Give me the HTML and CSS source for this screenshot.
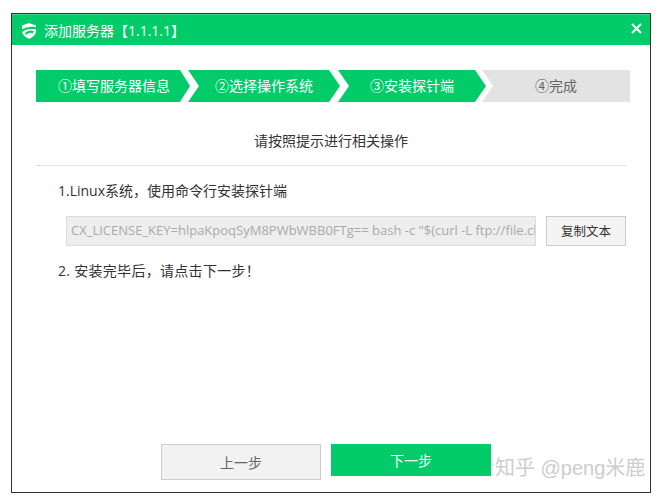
FILE: index.html
```html
<!DOCTYPE html>
<html lang="zh-CN">
<head>
<meta charset="utf-8">
<title>添加服务器</title>
<link rel="stylesheet" href="styles.css">
</head>
<body>
<div class="window">
  <header class="titlebar">
    <svg class="shield" width="14" height="16" viewBox="0 0 14 16"><path fill="#fff" d="M7 0 L14 2.4 V8 C14 11.6 10.5 14.5 7 16 C3.5 14.5 0 11.6 0 8 V2.4 Z"/><path fill="none" stroke="#02cc69" stroke-width="2.2" d="M-1 8.4 C3 5 8 4 15 5.4 M3.4 11 C6 8.6 8.8 8.2 11.4 9.2"/></svg>
    <span class="title">添加服务器【1.1.1.1】</span>
    <svg class="close" width="11" height="11" viewBox="0 0 11 11"><path stroke="#fff" stroke-width="2" d="M1 1 L10 10 M10 1 L1 10"/></svg>
  </header>
  <main class="content">
    <div class="steps">
      <div class="step step-first">①填写服务器信息</div>
      <div class="step step-second">②选择操作系统</div>
      <div class="step step-third">③安装探针端</div>
      <div class="step step-last">④完成</div>
    </div>
    <h2 class="heading">请按照提示进行相关操作</h2>
    <p class="line line-one">1.Linux系统，使用命令行安装探针端</p>
    <div class="command">
      <div class="command-box"><span class="command-text">CX_LICENSE_KEY=hlpaKpoqSyM8PWbWBB0FTg== bash -c "$(curl -L ftp://file.clo</span></div>
      <button class="copy">复制文本</button>
    </div>
    <p class="line line-two">2. 安装完毕后，请点击下一步！</p>
    <div class="actions">
      <button class="prev">上一步</button>
      <button class="next">下一步</button>
    </div>
  </main>
</div>
<div class="watermark">知乎 @peng米鹿</div>
</body>
</html>
```
FILE: styles.css
```css
* { box-sizing: border-box; }
html, body { margin: 0; padding: 0; background: #fff; }
body {
  width: 662px;
  height: 500px;
  overflow: hidden;
  position: relative;
  padding: 13px 11px 0 11px;
  font-family: "Open Sans", "Noto Sans CJK SC", sans-serif;
  font-size: 14px;
  color: #333;
}
.window {
  width: 640px;
  height: 480px;
  border: 1px solid #333;
  display: flex;
  flex-direction: column;
}
.titlebar {
  height: 31px;
  flex: none;
  background: #02cc69;
  color: #fff;
  display: flex;
  align-items: center;
  padding: 0 8px 0 10px;
  border-top: 1px solid #3fd98d;
}
.shield { flex: none; margin-top: 1px; }
.title { margin-left: 8px; font-size: 14px; white-space: nowrap; margin-top: -1px; }
.close { flex: none; margin-left: auto; margin-top: -3px; }
.content { flex: 1; padding: 25px 24px 0 24px; display: flex; flex-direction: column; }
.steps { display: flex; height: 32px; margin-right: -4px; font-size: 14px; }
.step {
  flex: none;
  height: 32px;
  line-height: 32px;
  color: #fff;
  background: #02cc69;
  white-space: nowrap;
}
.step-first {
  width: 154px;
  padding-left: 22px;
  clip-path: polygon(0 0, 144px 0, 154px 16px, 144px 32px, 0 32px);
}
.step-second {
  width: 152px;
  margin-left: -2px;
  padding-left: 27px;
  clip-path: polygon(0 0, 141px 0, 152px 16px, 141px 32px, 0 32px, 11px 16px);
}
.step-third {
  width: 149px;
  margin-left: -2px;
  padding-left: 32px;
  clip-path: polygon(0 0, 137px 0, 148px 16px, 137px 32px, 0 32px, 11px 16px);
}
.step-last {
  width: 148px;
  margin-left: -5px;
  padding-left: 53px;
  color: #666;
  background: #e3e3e3;
  clip-path: polygon(0 0, 148px 0, 148px 32px, 0 32px, 11px 16px);
}
.heading {
  margin: 0;
  height: 64px;
  padding-top: 29px;
  line-height: 20px;
  text-align: center;
  font-size: 14px;
  font-weight: 400;
  color: #333;
  border-bottom: 1px solid #ddd;
}
.line { margin: 0; padding-left: 22px; font-size: 14px; line-height: 20px; color: #333; }
.line-one { margin-top: 15px; }
.command { display: flex; gap: 10px; margin-top: 15px; padding-left: 30px; }
.command-box {
  width: 470px;
  height: 30px;
  line-height: 26px;
  padding: 0 0 0 4px;
  background: #eee;
  border: 1px solid #ddd;
  overflow: hidden;
  white-space: nowrap;
  color: #aaa;
  font-size: 13px;
}
.copy {
  width: 80px;
  height: 30px;
  padding: 0 0 2px;
  font: inherit;
  font-size: 12.5px;
  color: #333;
  background: #f4f4f4;
  border: 1px solid #ccc;
}
.line-two { margin-top: 15px; letter-spacing: 0.3px; }
.actions { display: flex; gap: 10px; margin-top: 163px; padding-left: 125px; align-items: flex-start; }
.prev, .next { width: 160px; padding: 0; font: inherit; font-size: 14px; }
.prev { height: 36px; background: #f2f2f2; border: 1px solid #ccc; color: #666; }
.next { height: 32px; background: #02cc69; border: 0; color: #fff; }
.watermark {
  position: absolute;
  left: 495px;
  top: 456px;
  font-family: "Liberation Sans", "Noto Sans CJK SC", sans-serif;
  font-size: 20px;
  line-height: 24px;
  color: #cdcdcd;
  white-space: nowrap;
  text-shadow: 0 0 2px #fff;
}
```
